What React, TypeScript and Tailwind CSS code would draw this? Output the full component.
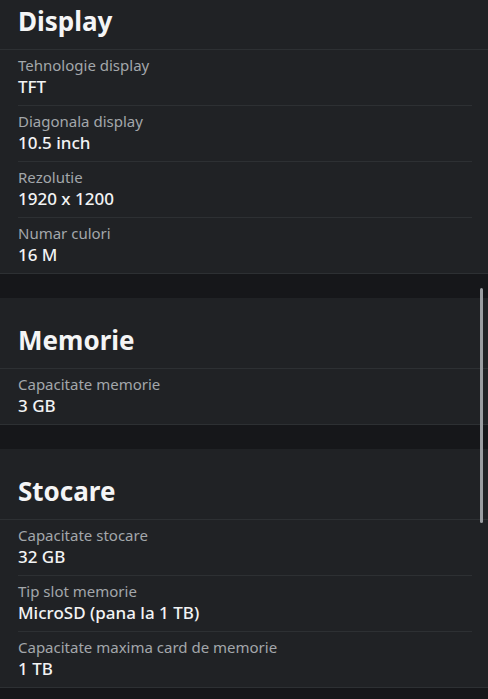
import React from "react";

type Spec = { label: string; value: string };
type Section = { title: string; specs: Spec[] };

const sections: Section[] = [
    {
        title: "Display",
        specs: [
            { label: "Tehnologie display", value: "TFT" },
            { label: "Diagonala display", value: "10.5 inch" },
            { label: "Rezolutie", value: "1920 x 1200" },
            { label: "Numar culori", value: "16 M" },
        ],
    },
    {
        title: "Memorie",
        specs: [{ label: "Capacitate memorie", value: "3 GB" }],
    },
    {
        title: "Stocare",
        specs: [
            { label: "Capacitate stocare", value: "32 GB" },
            { label: "Tip slot memorie", value: "MicroSD (pana la 1 TB)" },
            { label: "Capacitate maxima card de memorie", value: "1 TB" },
        ],
    },
];

function SpecSection({ section }: { section: Section }) {
    return (
        <section className="bg-[#202225] border-b border-[#2d3033]">
            <h2 className="px-[18px] pt-[28px] pb-[14px] text-[26px] leading-[28px] font-bold text-[#f4f5f6] border-b border-[#2d3033]">
                {section.title}
            </h2>
            <div className="pl-[18px] pr-[16px]">
                {section.specs.map((spec, i) => (
                    <div
                        key={spec.label}
                        className={`pt-[5px] pb-[6px] ${i < section.specs.length - 1 ? "border-b border-[#2d3033]" : ""}`}
                    >
                        <p className="text-[15px] leading-[20px] text-[#a3a7ab]">{spec.label}</p>
                        <p className="text-[17px] leading-[24px] font-medium text-[#f2f3f4]">{spec.value}</p>
                    </div>
                ))}
            </div>
        </section>
    );
}

export default function App() {
    return (
        <div className="relative h-[699px] w-[488px] overflow-hidden bg-[#16171a] font-['Noto_Sans',sans-serif]">
            <div className="-mt-[21px] flex flex-col gap-[24px]">
                {sections.map((s) => (
                    <SpecSection key={s.title} section={s} />
                ))}
            </div>
            <div className="absolute right-[5px] top-[288px] h-[235px] w-[3px] rounded-full bg-[#9a9da1]" />
        </div>
    );
}
